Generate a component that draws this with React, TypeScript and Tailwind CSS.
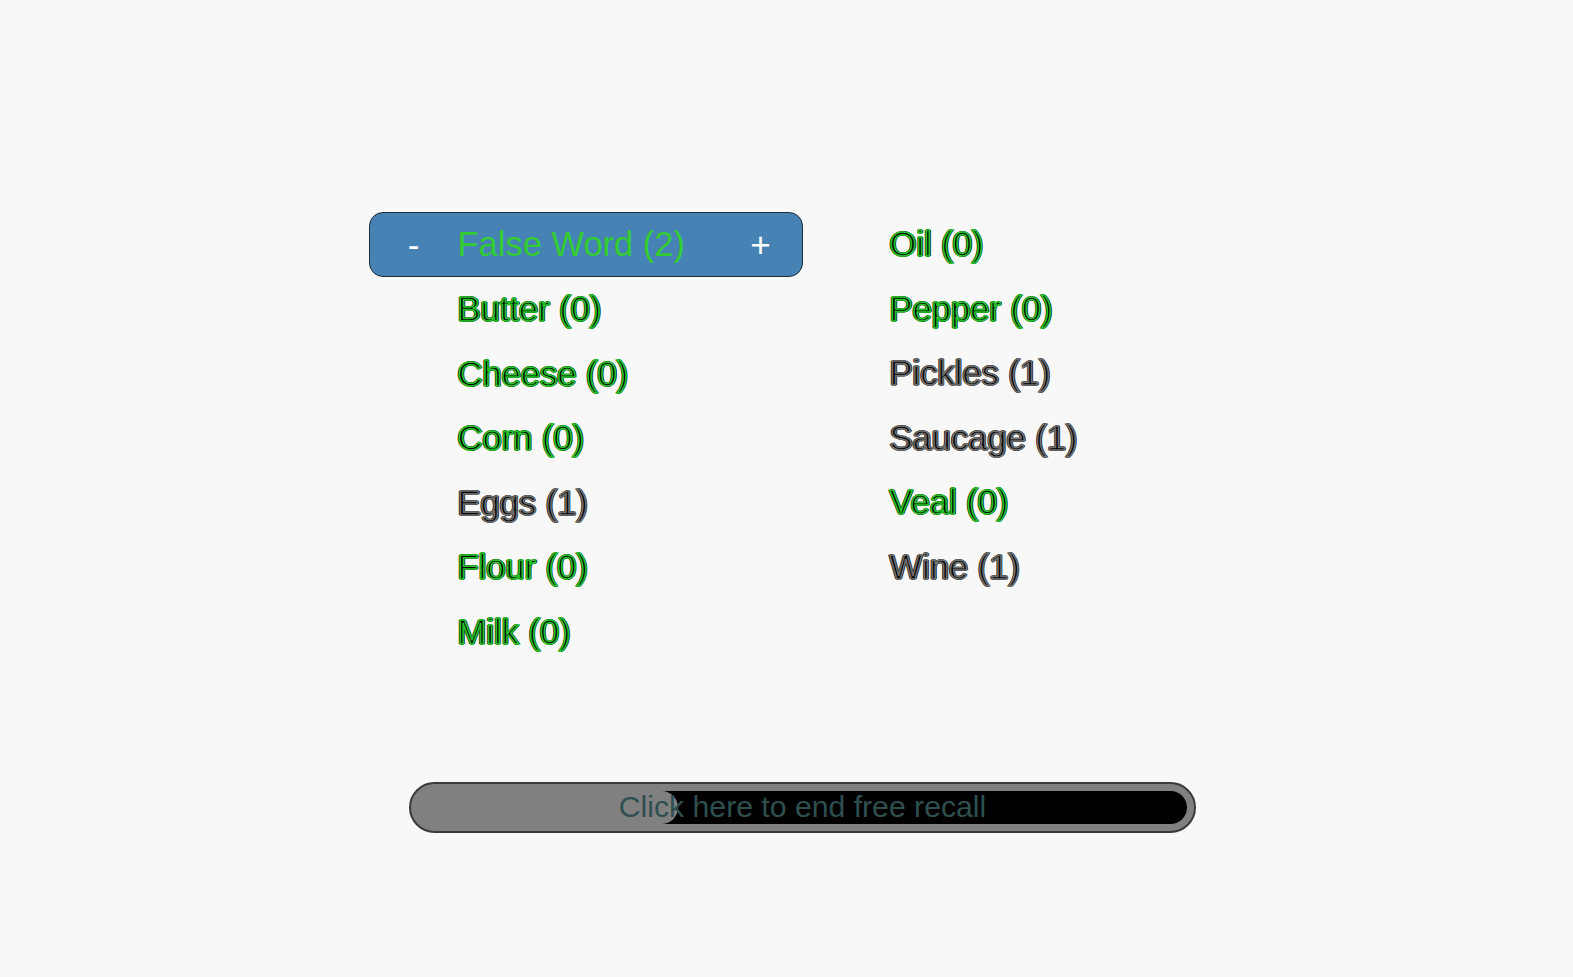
import React from "react";

type Word = { label: string; count: number };

const leftWords: Word[] = [
  { label: "Butter", count: 0 },
  { label: "Cheese", count: 0 },
  { label: "Corn", count: 0 },
  { label: "Eggs", count: 1 },
  { label: "Flour", count: 0 },
  { label: "Milk", count: 0 },
];

const rightWords: Word[] = [
  { label: "Oil", count: 0 },
  { label: "Pepper", count: 0 },
  { label: "Pickles", count: 1 },
  { label: "Saucage", count: 1 },
  { label: "Veal", count: 0 },
  { label: "Wine", count: 1 },
];

const WordRow: React.FC<{ word: Word; indent: string }> = ({ word, indent }) => {
  const recalled = word.count > 0;
  return (
    <div className={`h-[64.6px] flex items-center ${indent}`}>
      <span
        className={
          recalled
            ? "text-[34.5px] leading-none text-black [-webkit-text-stroke:1.6px_#6e6e6e] [text-shadow:1.4px_0_0_#1a1a1a,-1.4px_0_0_#1a1a1a,0_1.4px_0_#1a1a1a,0_-1.4px_0_#1a1a1a]"
            : "text-[34.5px] leading-none text-black [-webkit-text-stroke:1.6px_#27c02a] [text-shadow:1.4px_0_0_#0b2e0b,-1.4px_0_0_#0b2e0b,0_1.4px_0_#0b2e0b,0_-1.4px_0_#0b2e0b]"
        }
      >
        {word.label} ({word.count})
      </span>
    </div>
  );
};

export default function App() {
  const [falseCount, setFalseCount] = React.useState(2);

  return (
    <div
      className="min-h-screen w-full bg-[#f8f8f8] pl-[30px] pt-[212px]"
      style={{ fontFamily: '"Liberation Sans", Arial, sans-serif' }}
    >
      <div className="flex justify-center">
        <div className="grid grid-cols-[433px_433px]">
          {/* Left column */}
          <div className="flex flex-col">
            <div className="h-[65px] w-[434px] flex items-center rounded-[14px] border border-[#1e2d3a] bg-[#4682b4]">
              <button
                onClick={() => setFalseCount(Math.max(0, falseCount - 1))}
                className="w-[88px] text-center text-[35px] leading-none text-white"
              >
                -
              </button>
              <span className="flex-1 text-[34.5px] leading-none text-[#33cc33]">
                False Word ({falseCount})
              </span>
              <button
                onClick={() => setFalseCount(falseCount + 1)}
                className="w-[82px] text-center text-[35px] leading-none text-white"
              >
                +
              </button>
            </div>
            {leftWords.map((w) => (
              <WordRow key={w.label} word={w} indent="pl-[89px]" />
            ))}
          </div>

          {/* Right column */}
          <div className="flex flex-col">
            {rightWords.map((w) => (
              <WordRow key={w.label} word={w} indent="pl-[88px]" />
            ))}
          </div>
        </div>
      </div>

      {/* End recall bar */}
      <div className="flex justify-center mt-[117px]">
        <button className="relative w-[787px] h-[51px] ml-[2px] rounded-full border-2 border-[#3a3a3a] bg-[#808080] px-[7px] py-[7px] flex items-stretch">
          <div className="flex-1 rounded-full bg-black flex">
            <div className="w-[260px] rounded-r-full bg-[#808080]" />
          </div>
          <span className="absolute inset-0 flex items-center justify-center text-[30.2px] text-[#2f4f4f]">
            Click here to end free recall
          </span>
        </button>
      </div>
    </div>
  );
}
